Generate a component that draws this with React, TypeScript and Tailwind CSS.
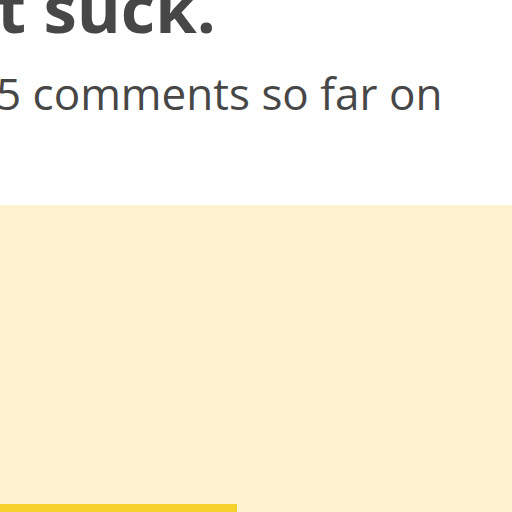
export default function App() {
  return (
    <div className="w-[512px] h-[512px] overflow-hidden bg-white flex flex-col" style={{ fontFamily: '"Open Sans", sans-serif' }}>
      <div className="h-[205px] shrink-0 flex flex-col text-[#474747]">
        <div className="-mt-[26px] -ml-[3px] text-[67px] font-bold leading-[67px] whitespace-nowrap">t suck.</div>
        <div className="-ml-[4px] mt-[30px] text-[44px] leading-[44px] whitespace-nowrap">5 comments so far on</div>
      </div>
      <div className="flex-1 bg-[#fef2cf] flex flex-col justify-end">
        <div className="h-[8px] w-[237px] bg-[#f5d22b]" />
      </div>
    </div>
  );
}
